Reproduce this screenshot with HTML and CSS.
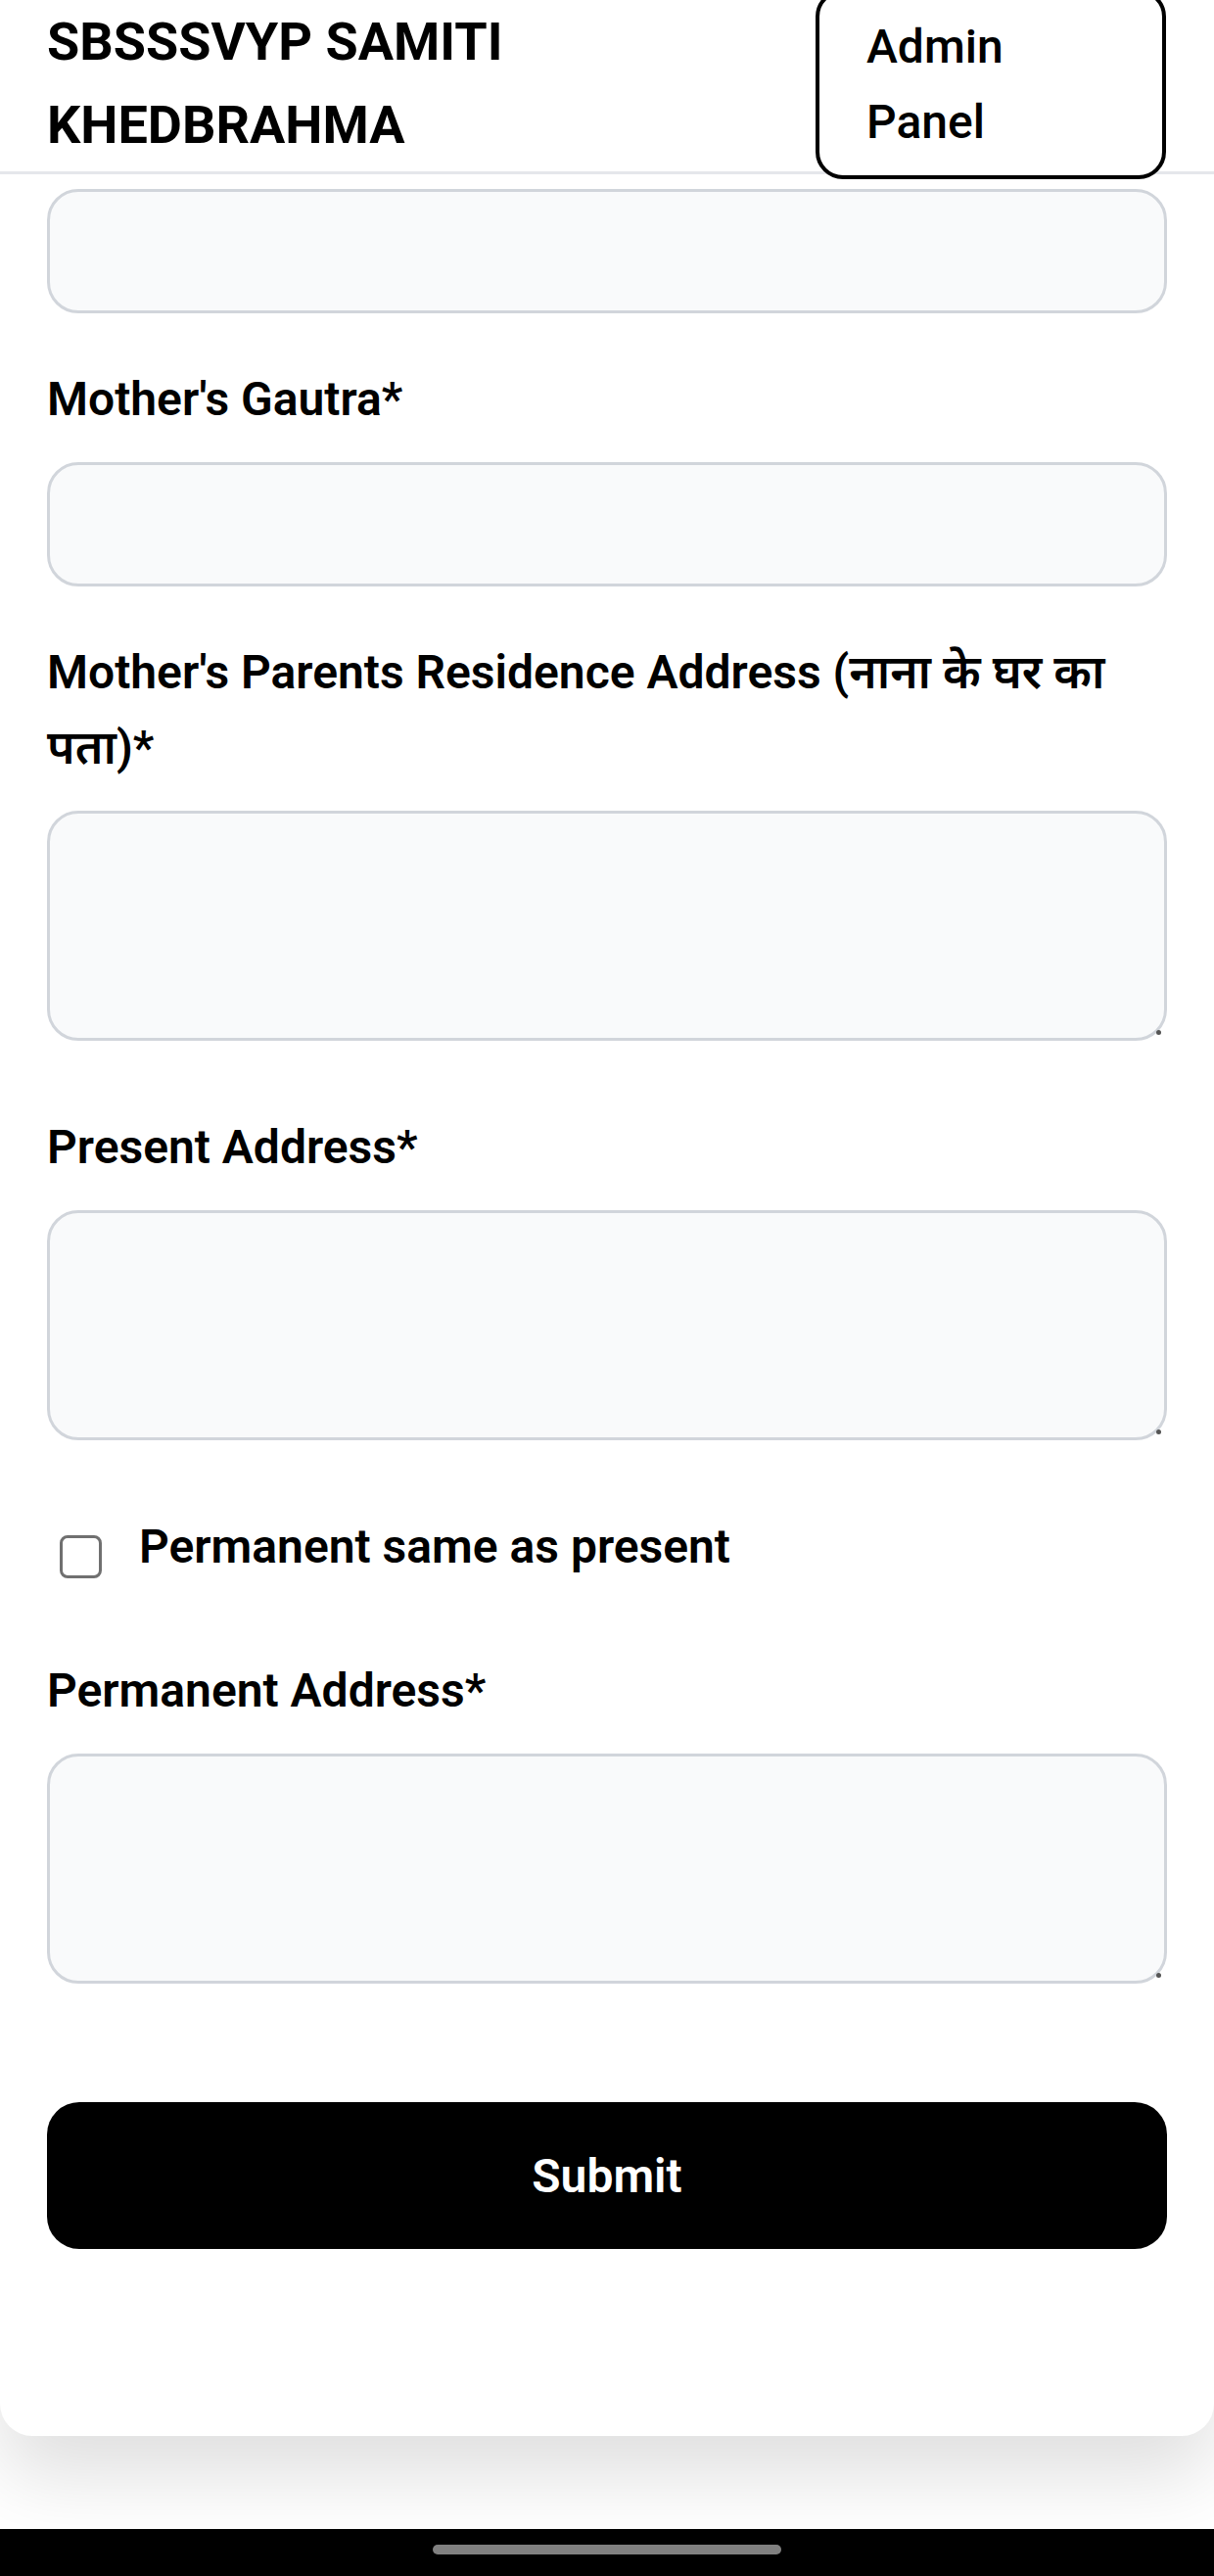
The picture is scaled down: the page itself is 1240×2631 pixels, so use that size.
FILE: index.html
```html
<!DOCTYPE html>
<html lang="en">
<head>
<meta charset="utf-8">
<title>SBSSSVYP SAMITI KHEDBRAHMA</title>
<link rel="stylesheet" href="styles.css">
</head>
<body>
<header class="topbar">
  <div class="brand">SBSSSVYP SAMITI KHEDBRAHMA</div>
  <button class="admin-btn" type="button">Admin Panel</button>
</header>

<main class="card">
  <form class="form">
    <div class="field">
      <input class="control control-input" type="text">
    </div>

    <div class="field">
      <label class="label">Mother's Gautra*</label>
      <input class="control control-input" type="text">
    </div>

    <div class="field field-area">
      <label class="label">Mother's Parents Residence Address (नाना के घर का पता)*</label>
      <div class="area-wrap"><textarea class="control control-area"></textarea></div>
    </div>

    <div class="field field-area">
      <label class="label">Present Address*</label>
      <div class="area-wrap"><textarea class="control control-area"></textarea></div>
    </div>

    <div class="field field-area check-row">
      <input class="check" type="checkbox">
      <span class="check-text">Permanent same as present</span>
    </div>

    <div class="field">
      <label class="label">Permanent Address*</label>
      <div class="area-wrap"><textarea class="control control-area"></textarea></div>
    </div>

    <button class="submit" type="button">Submit</button>
  </form>
</main>

<div class="navbar">
  <div class="pill"></div>
</div>
</body>
</html>
```

FILE: styles.css
```css
* {
  box-sizing: border-box;
}

html, body {
  margin: 0;
  padding: 0;
  background: #ffffff;
}

body {
  font-family: Roboto, "Noto Sans", "Noto Sans Devanagari", "Lohit Devanagari", "FreeSans", sans-serif;
  color: #000;
  width: 1240px;
  overflow: hidden;
}

.topbar {
  position: relative;
  z-index: 2;
  display: flex;
  justify-content: space-between;
  align-items: flex-start;
  gap: 40px;
  height: 178px;
  padding: 0 49px 0 48px;
  background: #fff;
  border-bottom: 3px solid #e5e7eb;
}

.brand {
  flex: 1;
  font-size: 54px;
  line-height: 85px;
  font-weight: 700;
}

.admin-btn {
  flex: none;
  width: 358px;
  margin-top: -11px;
  padding: 16px 48px;
  background: #fff;
  border: 4px solid #000;
  border-radius: 28px;
  font-family: inherit;
  font-size: 48px;
  line-height: 77px;
  font-weight: 500;
  color: #000;
  text-align: left;
}

.card {
  position: relative;
  z-index: 1;
  background: #fff;
  border-radius: 0 0 33px 33px;
  box-shadow: 0 40px 80px rgba(0, 0, 0, 0.13);
  padding: 15px 48px 191px;
}

.field {
  margin-bottom: 49px;
}

.field-area {
  margin-bottom: 70px;
}

.label {
  display: block;
  font-size: 48px;
  line-height: 77px;
  font-weight: 600;
  margin-bottom: 26px;
}

.control {
  display: block;
  width: 100%;
  margin: 0;
  border: 3px solid #d1d5db;
  background: #f9fafb;
  border-radius: 32px;
  font-family: inherit;
  font-size: 48px;
  padding: 20px 36px;
  outline: none;
}

.control-input {
  height: 127px;
}

.area-wrap {
  position: relative;
}

.area-wrap::after {
  content: "";
  position: absolute;
  right: 6px;
  bottom: 6px;
  width: 5px;
  height: 5px;
  border-radius: 50%;
  background: #555;
}

.control-area {
  height: 235px;
  resize: none;
}

.check-row {
  display: flex;
  align-items: flex-start;
}

.check {
  appearance: none;
  -webkit-appearance: none;
  flex: none;
  width: 43px;
  height: 44px;
  margin: 27px 38px 0 13px;
  border: 3px solid #707070;
  border-radius: 8px;
  background: #fff;
}

.check-text {
  font-size: 48px;
  line-height: 77px;
  font-weight: 600;
}

.submit {
  display: block;
  width: 100%;
  height: 150px;
  margin-top: 121px;
  border: none;
  border-radius: 33px;
  background: #000;
  color: #fff;
  font-family: inherit;
  font-size: 48px;
  font-weight: 600;
}

.navbar {
  margin-top: 95px;
  height: 48px;
  background: #000;
  padding-top: 16px;
}

.pill {
  width: 356px;
  height: 10px;
  margin: 0 auto;
  border-radius: 5px;
  background: #808080;
}
```
